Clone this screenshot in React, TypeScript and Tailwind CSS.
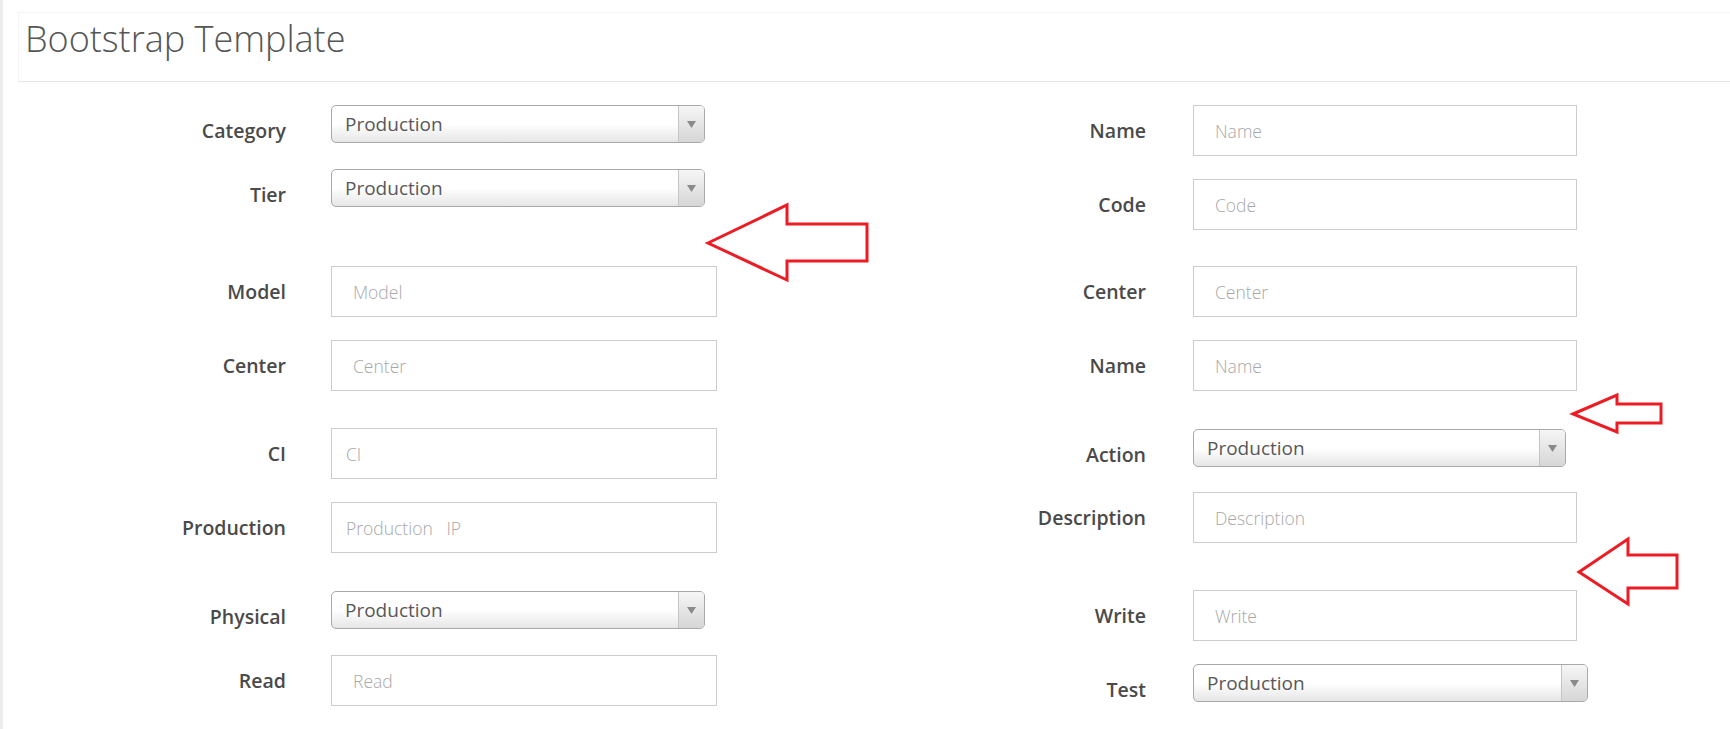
import React from "react";

type Row =
  | { kind: "input"; label: string; ph: string; mt: number; pad?: number; w: number }
  | { kind: "select"; label: string; mt: number; w: number };

const leftRows: Row[] = [
  { kind: "select", label: "Category", mt: 0, w: 374 },
  { kind: "select", label: "Tier", mt: 12, w: 374 },
  { kind: "input", label: "Model", ph: "Model", mt: 45, w: 386 },
  { kind: "input", label: "Center", ph: "Center", mt: 22, w: 386 },
  { kind: "input", label: "CI", ph: "CI", mt: 36, pad: 14, w: 386 },
  { kind: "input", label: "Production", ph: "Production\u00a0\u00a0\u00a0IP", mt: 22, pad: 14, w: 386 },
  { kind: "select", label: "Physical", mt: 37, w: 374 },
  { kind: "input", label: "Read", ph: "Read", mt: 12, w: 386 },
];

const rightRows: Row[] = [
  { kind: "input", label: "Name", ph: "Name", mt: 0, w: 384 },
  { kind: "input", label: "Code", ph: "Code", mt: 22, w: 384 },
  { kind: "input", label: "Center", ph: "Center", mt: 35, w: 384 },
  { kind: "input", label: "Name", ph: "Name", mt: 22, w: 384 },
  { kind: "select", label: "Action", mt: 37, w: 373 },
  { kind: "input", label: "Description", ph: "Description", mt: 11, w: 384 },
  { kind: "input", label: "Write", ph: "Write", mt: 46, w: 384 },
  { kind: "select", label: "Test", mt: 22, w: 395 },
];

function SelectBox({ w }: { w: number }) {
  return (
    <div
      className="flex h-[38px] rounded-[5px] border border-[#a9a9a9] bg-gradient-to-b from-white via-white to-[#e6e6e6] overflow-hidden"
      style={{ width: w }}
    >
      <div className="flex-1 flex items-center pl-[13px] text-[19px] text-[#585858] leading-none">
        Production
      </div>
      <div className="w-[26px] flex items-center justify-center border-l border-[#c4c4c4] bg-gradient-to-b from-[#f6f6f6] to-[#d6d6d6]">
        <svg width="9" height="7" viewBox="0 0 9 7">
          <path d="M0 0 L9 0 L4.5 7 Z" fill="#8a8a8a" />
        </svg>
      </div>
    </div>
  );
}

function InputBox({ ph, pad, w }: { ph: string; pad?: number; w: number }) {
  return (
    <input
      readOnly
      placeholder={ph}
      className="h-[51px] border border-[#cccccc] bg-white text-[17.5px] font-light text-[#555] placeholder:text-[#a8a8a8] outline-none"
      style={{ paddingLeft: pad ?? 21, width: w }}
    />
  );
}

function Column({ rows, labelW, gap }: { rows: Row[]; labelW: number; gap: number }) {
  return (
    <div className="flex flex-col">
      {rows.map((r, i) => (
        <div key={i} className="flex items-start" style={{ marginTop: r.mt }}>
          <div
            className="h-[52px] flex items-center justify-end text-[19.5px] font-semibold text-[#4a4a4a]"
            style={{ width: labelW, marginRight: gap }}
          >
            {r.label}
          </div>
          {r.kind === "select" ? <SelectBox w={r.w} /> : <InputBox ph={r.ph} pad={r.pad} w={r.w} />}
        </div>
      ))}
    </div>
  );
}

export default function App() {
  return (
    <div className="relative w-[1730px] h-[729px] bg-white overflow-hidden flex font-['Open_Sans',sans-serif]">
      <div className="w-[3px] bg-[#ececec]" />
      <div className="flex-1 pl-[15px]">
        <div className="mt-[12px] h-[70px] border-t border-l border-[#f4f4f4] border-b border-b-[#e4e4e4] pt-[8px] pl-[6px]">
          <h1 className="text-[36px] font-light text-[#555] leading-none">Bootstrap Template</h1>
        </div>
        <div className="flex pt-[23px]">
          <div className="w-[780px]">
            <Column rows={leftRows} labelW={268} gap={45} />
          </div>
          <Column rows={rightRows} labelW={348} gap={47} />
        </div>
      </div>
      <svg
        className="absolute left-0 top-0 pointer-events-none"
        width="1730"
        height="729"
        viewBox="0 0 1730 729"
      >
        <g fill="none" stroke="#ed1c24" strokeWidth="3" strokeLinejoin="miter">
          <path d="M708 243 L787 205 L787 224 L867 224 L867 261 L787 261 L787 280 Z" />
          <path d="M1573 414 L1617 395 L1617 404 L1661 404 L1661 423 L1617 423 L1617 432 Z" />
          <path d="M1579 572 L1628 539 L1628 555 L1677 555 L1677 588 L1628 588 L1628 604 Z" />
        </g>
      </svg>
    </div>
  );
}
